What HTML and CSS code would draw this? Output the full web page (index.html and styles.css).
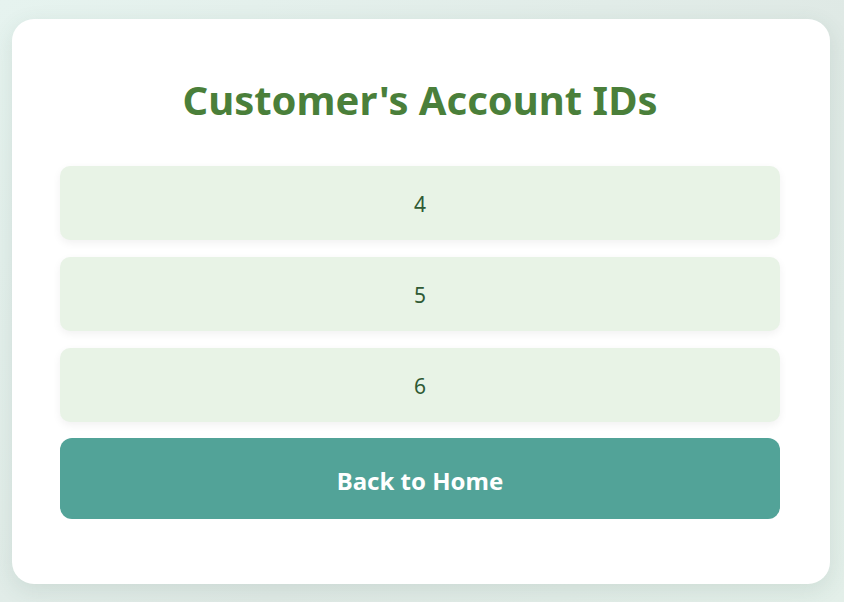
FILE: index.html
```html
<!DOCTYPE html>
<html lang="en">
<head>
<meta charset="utf-8">
<title>Customer's Account IDs</title>
<link rel="stylesheet" href="styles.css">
</head>
<body>
<main class="card">
  <h1 class="title">Customer's Account IDs</h1>
  <ul class="id-list">
    <li class="id-item">4</li>
    <li class="id-item">5</li>
    <li class="id-item">6</li>
  </ul>
  <a class="home-btn" href="#">Back to Home</a>
</main>
</body>
</html>
```
FILE: styles.css
```css
* { box-sizing: border-box; }
html, body { height: 100%; }
body {
  margin: 0;
  padding: 19px 14px 18px 12px;
  font-family: "Noto Sans", "Open Sans", sans-serif;
  background: linear-gradient(135deg, #e6f3ef 0%, #dfe9e5 60%, #e3efe9 100%);
}
.card {
  background: #ffffff;
  border-radius: 22px;
  box-shadow: 0 6px 22px rgba(60, 100, 80, 0.12);
  padding: 53px 50px 65px 48px;
  height: 565px;
}
.title {
  margin: 0 0 38px;
  text-align: center;
  color: #4a7f3a;
  font-size: 40px;
  font-weight: 700;
  line-height: 56px;
}
.id-list {
  list-style: none;
  margin: 0;
  padding: 0;
  display: flex;
  flex-direction: column;
  gap: 17px;
}
.id-item {
  height: 74px;
  padding-top: 2px;
  display: flex;
  align-items: center;
  justify-content: center;
  background: #e8f3e6;
  border-radius: 10px;
  box-shadow: 0 3px 8px rgba(0, 0, 0, 0.06);
  color: #2f5a34;
  font-size: 21px;
}
.home-btn {
  margin-top: 16px;
  height: 81px;
  padding-top: 3px;
  display: flex;
  align-items: center;
  justify-content: center;
  background: #52a398;
  border-radius: 12px;
  color: #ffffff;
  font-size: 24px;
  font-weight: 700;
  text-decoration: none;
}
```
